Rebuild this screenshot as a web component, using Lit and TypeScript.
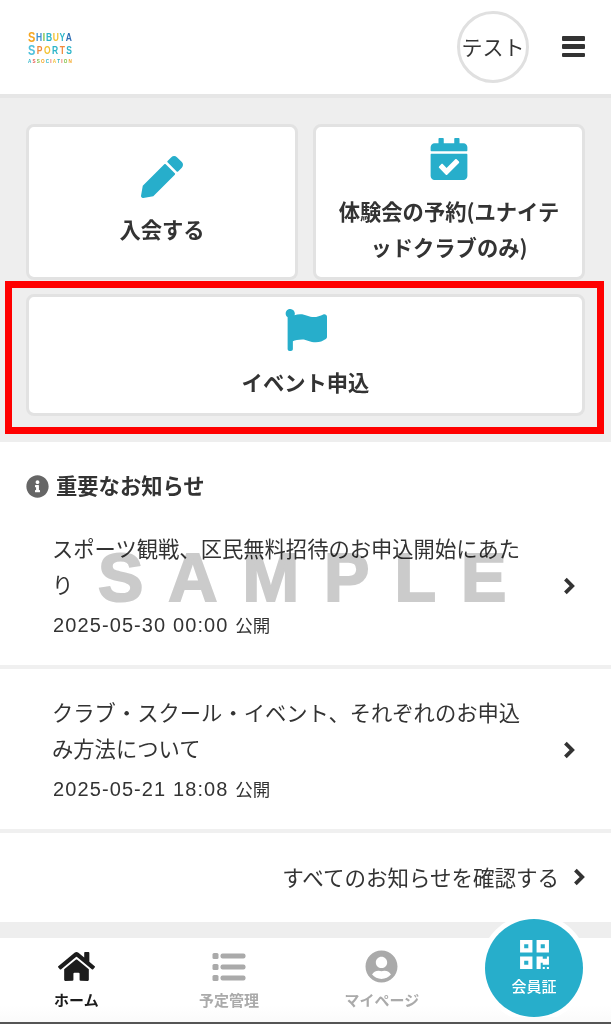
import { LitElement, html, css, svg } from "lit";
import { customElement } from "lit/decorators.js";

const P = {
  pen: "M497.9 142.1l-46.1 46.1c-4.7 4.7-12.3 4.7-17 0l-111-111c-4.7-4.7-4.7-12.3 0-17l46.1-46.1c18.7-18.7 49.1-18.7 67.9 0l60.1 60.1c18.8 18.7 18.8 49.1 0 67.9zM284.2 99.8L21.6 362.4.4 483.9c-2.9 16.4 11.4 30.6 27.8 27.8l121.5-21.3 262.6-262.6c4.7-4.7 4.7-12.3 0-17l-111-111c-4.8-4.7-12.4-4.7-17.1 0z",
  cal: "M436 160H12c-6.627 0-12-5.373-12-12v-36c0-26.51 21.49-48 48-48h48V12c0-6.627 5.373-12 12-12h40c6.627 0 12 5.373 12 12v52h128V12c0-6.627 5.373-12 12-12h40c6.627 0 12 5.373 12 12v52h48c26.51 0 48 21.49 48 48v36c0 6.627-5.373 12-12 12zM12 192h424c6.627 0 12 5.373 12 12v260c0 26.51-21.49 48-48 48H48c-26.51 0-48-21.49-48-48V204c0-6.627 5.373-12 12-12zm333.296 95.947l-28.169-28.398c-4.667-4.705-12.265-4.736-16.97-.068L194.12 364.665l-45.98-46.352c-4.667-4.705-12.266-4.736-16.971-.068l-28.397 28.17c-4.705 4.667-4.736 12.265-.068 16.97l82.601 83.269c4.667 4.705 12.265 4.736 16.97.068l142.953-141.805c4.705-4.667 4.736-12.265.068-16.97z",
  flag: "M349.565 98.783C295.978 98.783 251.721 64 184.348 64c-24.955 0-47.309 4.384-68.045 12.013a55.947 55.947 0 0 0 3.586-23.562C118.117 24.015 94.806 1.206 66.338.048 34.345-1.254 8 24.296 8 56c0 19.026 9.497 35.825 24 45.945V488c0 13.255 10.745 24 24 24h16c13.255 0 24-10.745 24-24v-94.4c28.311-12.064 63.582-22.122 114.435-22.122 53.588 0 97.844 34.783 165.217 34.783 48.169 0 86.667-16.294 122.505-40.858C506.84 359.452 512 349.571 512 339.045v-243.1c0-23.393-24.269-38.87-45.485-29.016-34.338 15.948-76.454 31.854-116.95 31.854z",
  home: "M280.37 148.26L96 300.11V464a16 16 0 0 0 16 16l112.06-.29a16 16 0 0 0 15.92-16V368a16 16 0 0 1 16-16h64a16 16 0 0 1 16 16v95.64a16 16 0 0 0 16 16.05L464 480a16 16 0 0 0 16-16V300L295.67 148.26a12.19 12.19 0 0 0-15.3 0zM571.6 251.47L488 182.56V44.05a12 12 0 0 0-12-12h-56a12 12 0 0 0-12 12v72.61L318.47 43a48 48 0 0 0-61 0L4.34 251.47a12 12 0 0 0-1.6 16.9l25.5 31A12 12 0 0 0 45.15 301l235.22-193.74a12.19 12.19 0 0 1 15.3 0L530.9 301a12 12 0 0 0 16.9-1.6l25.5-31a12 12 0 0 0-1.7-16.93z",
  user: "M248 8C111 8 0 119 0 256s111 248 248 248 248-111 248-248S385 8 248 8zm0 96c48.6 0 88 39.4 88 88s-39.4 88-88 88-88-39.4-88-88 39.4-88 88-88zm0 344c-58.7 0-111.3-26.6-146.5-68.2 18.8-35.4 55.6-59.8 98.5-59.8 2.4 0 4.8.4 7.1 1.1 13 4.2 26.6 6.9 40.9 6.9 14.3 0 28-2.7 40.9-6.9 2.3-.7 4.7-1.1 7.1-1.1 42.9 0 79.7 24.4 98.5 59.8C359.3 421.4 306.7 448 248 448z",
  qr: "M0 224h192V32H0v192zM64 96h64v64H64V96zm192-64v192h192V32H256zm128 128h-64V96h64v64zM0 480h192V288H0v192zm64-128h64v64H64v-64zm352-64h32v128h-96v-32h-32v96h-64V288h96v32h64v-32zm0 160h32v32h-32v-32zm-64 0h32v32h-32v-32z",
  info: "M256 8C119.043 8 8 119.083 8 256c0 136.997 111.043 248 248 248s248-111.003 248-248C504 119.083 392.957 8 256 8zm0 110c23.196 0 42 18.804 42 42s-18.804 42-42 42-42-18.804-42-42 18.804-42 42-42zm56 254c0 6.627-5.373 12-12 12h-88c-6.627 0-12-5.373-12-12v-24c0-6.627 5.373-12 12-12h12v-64h-12c-6.627 0-12-5.373-12-12v-24c0-6.627 5.373-12 12-12h64c6.627 0 12 5.373 12 12v100h12c6.627 0 12 5.373 12 12v24z",
};

const icon = (d: string, vb: string) =>
  html`<svg viewBox=${vb} aria-hidden="true">${svg`<path fill="currentColor" d=${d}></path>`}</svg>`;

const chevron = () =>
  html`<svg class="chev" viewBox="0 0 12 18" aria-hidden="true">${svg`<polyline points="2.4,2.2 9.2,9 2.4,15.8" fill="none" stroke="currentColor" stroke-width="3.8"></polyline>`}</svg>`;

const logoRow = (text: string, cls: string, colors: string[]) =>
  html`<div class="logo-row ${cls}">${[...text].map(
    (ch, i) => html`<span style="color:${colors[i % colors.length]}">${ch}</span>`
  )}</div>`;

@customElement("app-root")
export class AppRoot extends LitElement {
  static styles = css`
    :host {
      display: block;
      position: relative;
      width: 611px;
      height: 1024px;
      overflow: hidden;
      background: #fff;
      color: #333;
      font-family: "Noto Sans CJK JP", "Noto Sans", sans-serif;
    }
    * { box-sizing: border-box; }
    .page { display: flex; flex-direction: column; height: 100%; }

    header {
      height: 98px;
      flex: none;
      display: flex;
      align-items: center;
      border-bottom: 4px solid #e6e6e6;
      padding: 0 26px 0 28px;
    }
    .logo { width: 44px; display: flex; flex-direction: column; margin-top: 1px; margin-right: auto; }
    .logo-row {
      display: flex;
      justify-content: space-between;
      font-family: "Liberation Sans", sans-serif;
      font-weight: 700;
    }
    .logo-row span { display: block; transform: scaleY(1.35); }
    .logo-row.big { font-size: 8.5px; line-height: 13px; }
    .logo-row.big span:first-child { font-size: 11px; }
    .logo-row.small { font-size: 4.6px; line-height: 7px; }
    .avatar {
      width: 72px;
      height: 72px;
      border-radius: 50%;
      border: 3px solid #e0e0e0;
      display: flex;
      align-items: center;
      justify-content: center;
      font-size: 21px;
      line-height: 1;
      white-space: nowrap;
      margin-right: 33px;
      padding-bottom: 2px;
    }
    .bars { width: 23px; height: 21px; color: #333; display: flex; flex-direction: column; justify-content: space-between; margin-top: -1px; }
    .bars i { display: block; height: 4.5px; border-radius: 1px; background: currentColor; }

    .menu {
      flex: none;
      background: #eeeeee;
      padding: 26px;
      display: grid;
      grid-template-columns: 1fr 1fr;
      column-gap: 15px;
      row-gap: 14px;
    }
    .card {
      background: #fff;
      border: 3.5px solid #e2e2e2;
      border-radius: 8px;
      display: flex;
      flex-direction: column;
      align-items: center;
      justify-content: center;
      gap: 12.5px;
      height: 156px;
      padding: 0 14px;
      text-align: center;
      font-size: 21.3px;
      font-weight: 700;
      line-height: 36px;
    }
    .card span { padding-bottom: 1.5px; }
    .card.wide { grid-column: 1 / -1; height: 122px; }
    .card svg { height: 42px; width: 42px; color: #27aecb; display: block; flex: none; }

    .notices { flex: 1; display: flex; flex-direction: column; min-height: 0; }
    .notice-head {
      display: flex;
      align-items: center;
      gap: 7px;
      height: 63px;
      padding: 26px 26px 0;
      font-size: 21.3px;
      font-weight: 700;
      line-height: 36px;
    }
    .notice-head span { padding-bottom: 4px; }
    .notice-head svg { width: 23px; height: 23px; color: #666; }
    .item {
      display: flex;
      align-items: center;
      padding: 20px 36px 19px 53px;
      border-bottom: 4px solid #f0f0f0;
      height: 164px;
    }
    .item-body { flex: 1; min-width: 0; padding: 0 30px 3px 0; }
    .item-title { font-size: 21.3px; line-height: 36px; margin-left: -1px; }
    .item-date {
      font-family: "Liberation Sans", "Noto Sans CJK JP", sans-serif;
      font-size: 20px;
      letter-spacing: 1.1px;
      line-height: 26px;
      margin-top: 10px;
    }
    .item-date span { font-size: 17.5px; letter-spacing: 0; }
    .chev { width: 12px; height: 18px; color: #333; flex: none; display: block; }
    .all {
      height: 88px;
      flex: none;
      display: flex;
      align-items: center;
      justify-content: flex-end;
      gap: 14px;
      padding: 0 26px 0 0;
      font-size: 21.5px;
    }
    .all span { padding-bottom: 2px; }

    .spacer { height: 16px; flex: none; background: #eeeeee; }
    nav {
      height: 86px;
      flex: none;
      display: grid;
      grid-template-columns: repeat(4, 1fr);
      border-bottom: 2px solid #555;
      background: #fff;
      background-image: linear-gradient(#fff 80%, #fafafa);
    }
    .tab {
      display: flex;
      flex-direction: column;
      align-items: center;
      padding-top: 12px;
      color: #aaa;
      font-size: 15px;
      font-weight: 700;
      line-height: 20px;
    }
    .tab svg { height: 33px; width: 37px; display: block; margin-bottom: 7px; }
    .tab.on { color: #1c1c1c; }

    .member {
      position: absolute;
      left: 480px;
      top: 914px;
      width: 108px;
      height: 108px;
      border-radius: 50%;
      background: #fff;
      display: flex;
      align-items: center;
      justify-content: center;
      clip-path: inset(0 0 5px 0);
    }
    .member-in {
      width: 98px;
      height: 98px;
      border-radius: 50%;
      background: #27aecb;
      color: #fff;
      display: flex;
      flex-direction: column;
      align-items: center;
      padding-top: 19px;
      font-size: 15px;
      line-height: 20px;
      font-weight: 500;
    }
    .member-in svg { width: 29px; height: 33px; display: block; margin-bottom: 5px; }

    .frame {
      position: absolute;
      left: 5px;
      top: 281px;
      width: 599px;
      height: 153px;
      border: 7px solid #ff0000;
      pointer-events: none;
    }
    .sample {
      position: absolute;
      left: 98px;
      top: 537px;
      font-family: "Liberation Sans", sans-serif;
      font-size: 68px;
      font-weight: 700;
      line-height: 80px;
      letter-spacing: 25px;
      color: #cbcbcb;
      -webkit-text-stroke: 2px #cbcbcb;
      mix-blend-mode: multiply;
      white-space: nowrap;
      pointer-events: none;
    }
  `;

  render() {
    return html`
      <div class="page">
        <header>
          <div class="logo">
            ${logoRow("SHIBUYA", "big", ["#f5a623", "#3d8fd1", "#7bc043", "#2cb5c9", "#f2c230", "#2cb5c9", "#2f6fb5"])}
            ${logoRow("SPORTS", "big", ["#4fc0dc", "#f08a3c", "#f2c230", "#2cb5c9", "#f08a3c", "#2cb5c9"])}
            ${logoRow("ASSOCIATION", "small", ["#2cb5c9", "#e8574f", "#7bc043", "#f5a623", "#2cb5c9", "#e8574f", "#f2c230"])}
          </div>
          <div class="avatar">テスト</div>
          <div class="bars"><i></i><i></i><i></i></div>
        </header>

        <section class="menu">
          <div class="card">${icon(P.pen, "0 0 512 512")}<span>入会する</span></div>
          <div class="card">${icon(P.cal, "0 0 448 512")}<span>体験会の予約(ユナイテッドクラブのみ)</span></div>
          <div class="card wide">${icon(P.flag, "0 0 512 512")}<span>イベント申込</span></div>
        </section>

        <section class="notices">
          <div class="notice-head">${icon(P.info, "0 0 512 512")}<span>重要なお知らせ</span></div>
          <div class="item">
            <div class="item-body">
              <div class="item-title">スポーツ観戦、区民無料招待のお申込開始にあたり</div>
              <div class="item-date">2025-05-30 00:00 <span>公開</span></div>
            </div>
            ${chevron()}
          </div>
          <div class="item">
            <div class="item-body">
              <div class="item-title">クラブ・スクール・イベント、それぞれのお申込み方法について</div>
              <div class="item-date">2025-05-21 18:08 <span>公開</span></div>
            </div>
            ${chevron()}
          </div>
          <div class="all"><span>すべてのお知らせを確認する</span>${chevron()}</div>
        </section>

        <div class="spacer"></div>
        <nav>
          <div class="tab on">${icon(P.home, "0 0 576 512")}<span>ホーム</span></div>
          <div class="tab">
            <svg viewBox="0 0 37 33" aria-hidden="true">
              ${svg`<g fill="currentColor">
                <rect x="1.5" y="3" width="6" height="6" rx="1.5"></rect><rect x="9.5" y="3.5" width="25" height="5" rx="2"></rect>
                <rect x="1.5" y="14" width="6" height="6" rx="1.5"></rect><rect x="9.5" y="14.5" width="25" height="5" rx="2"></rect>
                <rect x="1.5" y="25" width="6" height="6" rx="1.5"></rect><rect x="9.5" y="25.5" width="25" height="5" rx="2"></rect>
              </g>`}
            </svg>
            <span>予定管理</span>
          </div>
          <div class="tab">${icon(P.user, "0 0 496 512")}<span>マイページ</span></div>
          <div></div>
        </nav>
      </div>

      <div class="member">
        <div class="member-in">${icon(P.qr, "0 0 448 512")}<span>会員証</span></div>
      </div>
      <div class="frame"></div>
      <div class="sample">SAMPLE</div>
    `;
  }
}
